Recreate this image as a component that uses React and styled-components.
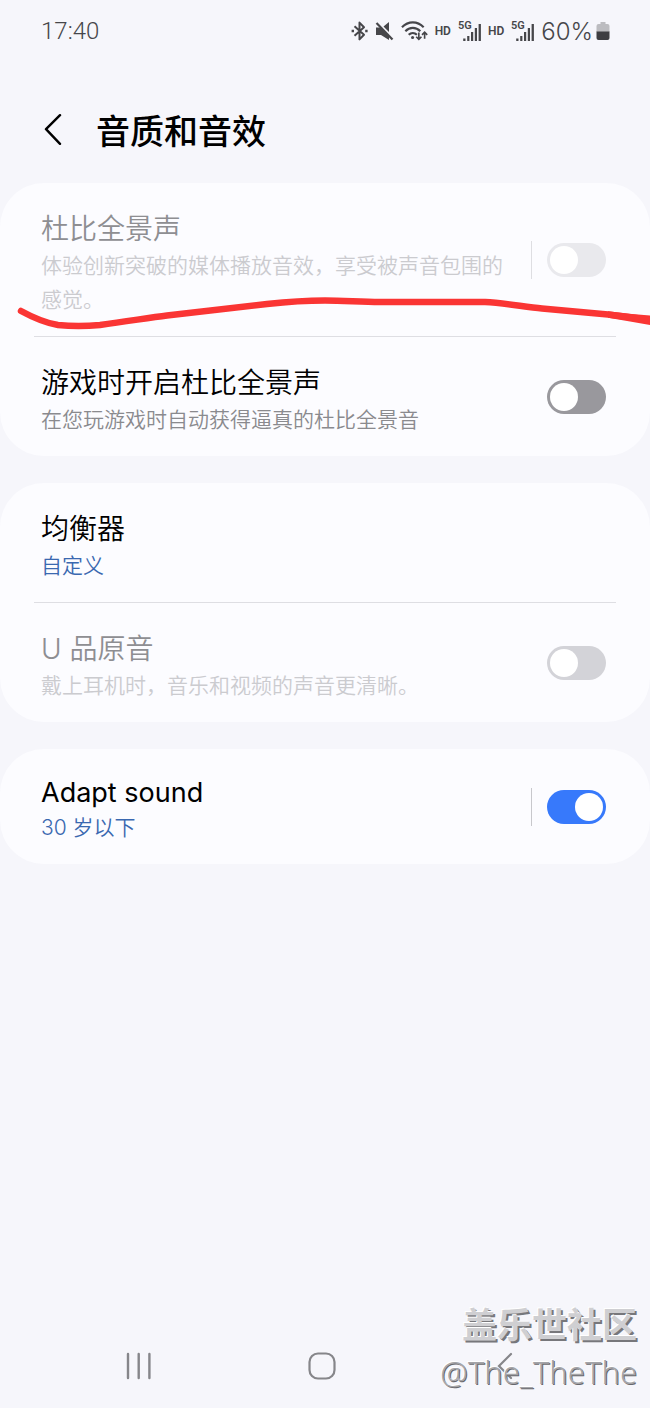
import { useState } from "react"
import styled, { createGlobalStyle } from "styled-components"

const GlobalStyle=createGlobalStyle`
*{
box-sizing:border-box;
}
body{
margin:0;
background:#f6f6fb;
font-family:Inter, "Noto Sans CJK SC", sans-serif;
color:#000;
}
`
const Page=styled.div`
position:relative;
display:flex;
flex-direction:column;
min-height:100vh;
overflow:hidden;
`
const StatusBar=styled.header`
display:flex;
align-items:center;
justify-content:space-between;
height:62px;
padding:0 40px 0 41px;
color:#46464a;
font-family:Roboto, sans-serif;
font-size:24px;
font-weight:300;
`
const StatusIcons=styled.div`
display:flex;
align-items:center;
gap:7px;
svg{
display:block;
flex:none;
}
`
const HdLabel=styled.span`
font-size:12px;
font-weight:600;
line-height:20px;
`
const BatteryLevel=styled.span`
display:flex;
align-items:center;
gap:3px;
font-family:Inter, sans-serif;
`
const TitleBar=styled.div`
display:flex;
align-items:center;
gap:34px;
padding:45px 44px 26px;
`
const IconButton=styled.button`
display:flex;
align-items:center;
justify-content:center;
padding:0;
border:none;
background:none;
color:inherit;
`
const Title=styled.h1`
margin:0;
font-size:34px;
font-weight:500;
line-height:50px;
`
const Sections=styled.main`
display:flex;
flex-direction:column;
gap:27px;
`
const Card=styled.section`
padding:0;
border-radius:44px;
background:#fcfcff;
`
const Divider=styled.hr`
height:1px;
margin:0 34px;
border:none;
background:#dedee3;
`
const Row=styled.div`
display:flex;
align-items:center;
padding:0 44px 0 41px;
`
const RowText=styled.div`
display:block;
flex:1;
padding:26px 14px 19px 0;
`
const RowTitle=styled.span`
display:block;
font-size:${props=>props.$latin?"27px":"28px"};
line-height:${props=>props.$latin?"36px":"40px"};
font-weight:${props=>props.$latin?400:350};
color:${props=>props.$dim?"#8e8e92":"#000"};
`
const RowNote=styled.span`
display:block;
font-size:21px;
font-weight:350;
line-height:34px;
color:${props=>props.$color};
`
const SwitchBox=styled.div`
display:flex;
align-items:center;
padding-left:15px;
height:38px;
border-left:1px solid ${props=>props.$line||"transparent"};
`
const Switch=styled.input`
appearance:none;
display:flex;
align-items:center;
width:59px;
height:34px;
margin:0;
padding:3px;
border-radius:17px;
background:${props=>props.$track};
&::before{
content:"";
display:block;
width:28px;
height:28px;
border-radius:50%;
background:#fff;
}
&:checked{
background:#3779fb;
}
&:checked::before{
margin-left:auto;
}
`
const NavBar=styled.nav`
display:grid;
grid-template-columns:repeat(3,1fr);
margin-top:auto;
padding:0 54px 0 47px;
height:84px;
color:#86868a;
`
const Scribble=styled.svg`
position:absolute;
top:290px;
left:0;
width:100%;
height:44px;
pointer-events:none;
`
const Watermark=styled.div`
position:absolute;
right:13px;
bottom:13px;
text-align:right;
pointer-events:none;
`
const Community=styled.div`
font-size:35px;
font-weight:700;
line-height:48px;
color:#cfcfd2;
text-shadow:-1px -1px 0 #fff, 2px 2px 0 #77777b;
`
const Handle=styled.div`
font-family:"Noto Sans", sans-serif;
font-size:31px;
font-weight:300;
line-height:46px;
color:#a4a4a8;
text-shadow:-1px -1px 0 #fff, 1px 1px 0 #68686c;
`

const BluetoothIcon=()=>(
    <svg width="17" height="20" viewBox="0 0 17 20" fill="none" stroke="currentColor" strokeWidth="2" strokeLinejoin="round">
        <path d="M3.5 5.2 13 13.8 8.5 18.4V1.6L13 6.2 3.5 14.8"/>
        <path d="M.6 10H3M14.2 10h2.4" strokeWidth="2.4"/>
    </svg>
)
const MuteIcon=()=>(
    <svg width="19" height="20" viewBox="0 0 19 20" fill="currentColor">
        <path d="M1 6.500h4.500L14 15v4L6 14H1zM8.500 5.500 14 1v10z"/>
        <path d="M1.500 2 17.500 18.500" stroke="currentColor" strokeWidth="2.200"/>
    </svg>
)
const WifiIcon=()=>(
    <svg width="27" height="22" viewBox="0 0 28 22" fill="none" stroke="currentColor" strokeWidth="2.200">
        <path d="M1 7.200C7.500.4 17 .4 23.500 7.200M4.500 11.200c4.500-4.600 11-4.600 15.500 0M8 15c2.500-2.600 6-2.600 8.500 0"/>
        <circle cx="12" cy="17.800" r="1.600" fill="currentColor" stroke="none"/>
        <path d="M18.500 12.500v7M15.800 17l2.700 2.700 2.700-2.700M24.500 19v-6.500M21.800 15l2.700-2.700 2.700 2.700" strokeWidth="1.700"/>
    </svg>
)
const SignalIcon=()=>(
    <svg width="23" height="22" viewBox="0 0 23 22" fill="currentColor">
        <text x="0" y="9" fontSize="11" fontWeight="600">5G</text>
        <path d="M5.200 18.500h2.300V21H5.200zM9.200 16h2.200v5H9.200zM13 12h2.200v9H13zM16.800 8H19v13h-2.200zM20.600 4h2.300v17h-2.300z"/>
    </svg>
)
const BatteryIcon=()=>(
    <svg width="14" height="20" viewBox="0 0 14 20">
        <path d="M4.500 1h5v2H11.500a2 2 0 0 1 2 2V11H.5V5a2 2 0 0 1 2-2h2z" fill="#bcbcc0"/>
        <path d="M.5 10.500h13V17a2 2 0 0 1-2 2h-9a2 2 0 0 1-2-2z" fill="#3e3e42"/>
    </svg>
)

const Setting=({id,title,note,noteColor,dim,latin,line,track,disabled,on})=>{
    const [checked,setChecked]=useState(!!on)
    return(
        <Row>
            <RowText htmlFor={track?id:undefined} as={track?"label":"div"}>
                <RowTitle $dim={dim} $latin={latin}>{title}</RowTitle>
                <RowNote $color={noteColor}>{note}</RowNote>
            </RowText>
            {track&&(
                <SwitchBox $line={line}>
                    <Switch id={id} type="checkbox" $track={track} disabled={disabled} checked={checked} onChange={e=>setChecked(e.target.checked)}/>
                </SwitchBox>
            )}
        </Row>
    )
}

const App=()=>{
    return(
        <Page>
            <GlobalStyle/>
            <StatusBar>
                <span>17:40</span>
                <StatusIcons>
                    <BluetoothIcon/>
                    <MuteIcon/>
                    <WifiIcon/>
                    <HdLabel>HD</HdLabel>
                    <SignalIcon/>
                    <HdLabel>HD</HdLabel>
                    <SignalIcon/>
                    <BatteryLevel>60%<BatteryIcon/></BatteryLevel>
                </StatusIcons>
            </StatusBar>
            <TitleBar>
                <IconButton aria-label="返回">
                    <svg width="18" height="36" viewBox="0 0 18 36" fill="none" stroke="currentColor" strokeWidth="2.400" strokeLinecap="round" strokeLinejoin="round">
                        <path d="M16 1.200 2 15.200 16 29.800"/>
                    </svg>
                </IconButton>
                <Title>音质和音效</Title>
            </TitleBar>
            <Sections>
                <Card>
                    <Setting id="dolby" title="杜比全景声" note="体验创新突破的媒体播放音效，享受被声音包围的感觉。" noteColor="#cbcbcf" dim line="#dedee2" track="#e9e9ed" disabled/>
                    <Divider/>
                    <Setting id="game" title="游戏时开启杜比全景声" note="在您玩游戏时自动获得逼真的杜比全景音" noteColor="#8a8a8e" track="#99989d"/>
                </Card>
                <Card>
                    <Setting title="均衡器" note="自定义" noteColor="#3a68b0"/>
                    <Divider/>
                    <Setting id="upscale" title="U 品原音" note="戴上耳机时，音乐和视频的声音更清晰。" noteColor="#cbcbcf" dim track="#d3d3d8" disabled/>
                </Card>
                <Card>
                    <Setting id="adapt" title="Adapt sound" note="30 岁以下" noteColor="#3a68b0" latin line="#c8c8cc" track="#99989d" on/>
                </Card>
            </Sections>
            <NavBar>
                <IconButton aria-label="最近">
                    <svg width="28" height="28" viewBox="0 0 28 28" stroke="currentColor" strokeWidth="2.400" strokeLinecap="round">
                        <path d="M3 2v24M13.700 2v24M24.400 2v24"/>
                    </svg>
                </IconButton>
                <IconButton aria-label="主页">
                    <svg width="28" height="28" viewBox="0 0 28 28" fill="none" stroke="currentColor" strokeWidth="2.200">
                        <rect x="1.500" y="1.500" width="25" height="25" rx="8.500"/>
                    </svg>
                </IconButton>
                <IconButton aria-label="返回">
                    <svg width="16" height="28" viewBox="0 0 16 28" fill="none" stroke="currentColor" strokeWidth="2.200" strokeLinecap="round">
                        <path d="M14 2 2 14l12 12"/>
                    </svg>
                </IconButton>
            </NavBar>
            <Scribble viewBox="0 290 650 44" preserveAspectRatio="none">
                <path d="M21 311C32 317 45 323 58 325C72 326.500 90 326 100 325C130 321 150 317.500 167 315.500L267 304C290 301.500 305 300.500 325 300.500C345 300.500 360 302 380 302H485C505 303 525 307 542 308.500L608 314.500L640 318.500" fill="none" stroke="#fa3534" strokeWidth="6.500" strokeLinecap="round" strokeLinejoin="round"/>
                <path d="M608 311.300 632 314 650 315.500V325L630 321.500 608 317.700z" fill="#fa3534"/>
            </Scribble>
            <Watermark>
                <Community>盖乐世社区</Community>
                <Handle>@The_TheThe</Handle>
            </Watermark>
        </Page>
    )
}
export default App
